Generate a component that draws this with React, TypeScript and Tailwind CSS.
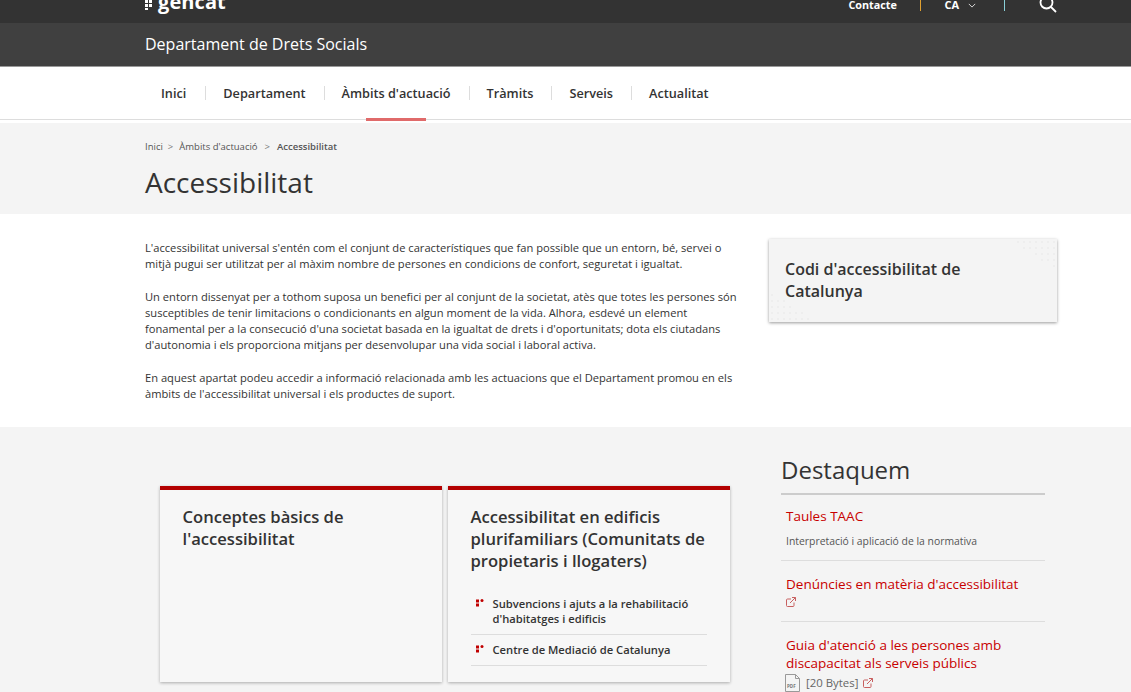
const Ext = ({ cls = "" }: { cls?: string }) => (
  <svg viewBox="0 0 10 10" className={`w-[10px] h-[10px] ${cls}`} fill="none" stroke="#c86060" strokeWidth="1">
    <path d="M5 2H1.5a1 1 0 0 0-1 1v5.5a1 1 0 0 0 1 1H7a1 1 0 0 0 1-1V5.5" />
    <path d="M6 .5h3.5V4M9.5.5 4 6" />
  </svg>
);

const Bullet = () => (
  <svg viewBox="0 0 8 8" className="w-[8px] h-[8px] shrink-0 mt-[-1px]" fill="#c00000">
    <rect x="0" y="0.5" width="3" height="3" />
    <rect x="0" y="4.5" width="3" height="3" />
    <rect x="4.5" y="0" width="3" height="3" rx="1.5" />
  </svg>
);

const Dots = ({ cls }: { cls: string }) => (
  <svg viewBox="0 0 48 30" className={`absolute w-[48px] h-[30px] ${cls}`} fill="#ececec">
    {[0, 1, 2, 3, 4].flatMap((r) =>
      [0, 1, 2, 3, 4, 5, 6, 7].map((c) =>
        c > r * 1.6 ? <circle key={`${r}-${c}`} cx={c * 6 + 3} cy={r * 6 + 3} r="1" /> : null
      )
    )}
  </svg>
);

const nav = ["Inici", "Departament", "Àmbits d'actuació", "Tràmits", "Serveis", "Actualitat"];

export default function App() {
  return (
    <div className="h-[692px] overflow-hidden bg-[#f4f4f4] text-[#333] font-['Open_Sans',sans-serif]">
      <div className="h-[23px] bg-[#333] overflow-hidden">
        <div className="w-[912px] ml-[145px] flex items-start h-[23px] text-white">
          <div className="flex items-start gap-[3px]">
            <svg viewBox="0 0 10 10" className="w-[10px] h-[10px]" fill="#fff">
              <rect x="0" y="0" width="3" height="3" />
              <rect x="4" y="0" width="3" height="3" />
              <rect x="0" y="4" width="3" height="3" />
              <rect x="4" y="4" width="3" height="3" />
              <rect x="0" y="8" width="3" height="2" />
            </svg>
            <span className="text-[20px] font-bold leading-[20px] -mt-[8px] tracking-[0.1px]">gencat</span>
          </div>
          <div className="ml-auto flex items-start">
            <span className="text-[10.8px] font-bold leading-[10px] w-[50px]">Contacte</span>
            <span className="ml-[22px] w-px h-[11px] bg-[#e0a030]" />
            <span className="ml-[23px] text-[11px] font-bold leading-[10px]">CA</span>
            <svg viewBox="0 0 10 6" className="ml-[9px] w-[8px] h-[5px] mt-[3px]" fill="none" stroke="#ddd" strokeWidth="1.2"><path d="M1 1l4 4 4-4" /></svg>
            <span className="ml-[28px] w-px h-[11px] bg-[#8ad0d8]" />
            <svg viewBox="0 0 18 18" className="ml-[34px] w-[18px] h-[18px] -mt-[5px]" fill="none" stroke="#fff" strokeWidth="1.8"><circle cx="7.5" cy="7.5" r="6" /><path d="M12 12l5 5" /></svg>
          </div>
        </div>
      </div>
      <div className="h-[44px] bg-[#404040] border-b border-b-[#999]">
        <div className="w-[912px] ml-[145px] text-white text-[16px] leading-[43px]">Departament de Drets Socials</div>
      </div>
      <nav className="h-[53px] bg-white border-b border-b-[#ddd] relative">
        <div className="w-[912px] ml-[145px] flex items-center h-[52px] pt-[1px]">
          {nav.map((n, i) => (
            <div key={n} className="flex items-center">
              {i > 0 && <span className="w-px h-[14px] bg-[#ddd]" />}
              <span className={`text-[12.7px] font-semibold text-[#333] ${i === 0 ? "pl-[16px] pr-[19px]" : "pl-[17px] pr-[18px]"}`}>{n}</span>
            </div>
          ))}
        </div>
        <span className="absolute left-[366px] top-[51px] w-[60px] h-[3px] bg-[#e06a6a]" />
      </nav>
      <div className="h-[94px] border-t-[3px] border-t-white bg-[#f4f4f4]">
        <div className="w-[912px] ml-[145px] pt-[17px]">
          <div className="flex items-center text-[9.5px] leading-[14px] text-[#555]">
            <span>Inici</span><span className="ml-[5px] mr-[6px] text-[#777]">&gt;</span>
            <span>Àmbits d'actuació</span><span className="mx-[7px] text-[#777]">&gt;</span>
            <span className="font-semibold">Accessibilitat</span>
          </div>
          <h1 className="text-[28px] leading-[38px] mt-[9px] text-[#333]">Accessibilitat</h1>
        </div>
      </div>
      <div className="h-[213px] bg-white">
        <div className="w-[912px] ml-[145px] flex">
          <div className="w-[600px] pt-[26px] text-[11.15px] leading-[16px] text-[#333]">
            <p className="mb-[17px]">L'accessibilitat universal s'entén com el conjunt de característiques que fan possible que un entorn, bé, servei o mitjà pugui ser utilitzat per al màxim nombre de persones en condicions de confort, seguretat i igualtat.</p>
            <p className="mb-[17px]">Un entorn dissenyat per a tothom suposa un benefici per al conjunt de la societat, atès que totes les persones són susceptibles de tenir limitacions o condicionants en algun moment de la vida. Alhora, esdevé un element fonamental per a la consecució d'una societat basada en la igualtat de drets i d'oportunitats; dota els ciutadans d'autonomia i els proporciona mitjans per desenvolupar una vida social i laboral activa.</p>
            <p>En aquest apartat podeu accedir a informació relacionada amb les actuacions que el Departament promou en els àmbits de l'accessibilitat universal i els productes de suport.</p>
          </div>
          <div className="ml-[24px] mt-[25px] w-[288px] h-[83px] bg-[#f4f4f4] shadow-[0_1px_3px_rgba(0,0,0,0.4)] relative overflow-hidden px-[16px] pt-[19px]">
            <Dots cls="top-0 right-0" />
            <Dots cls="bottom-0 left-0 rotate-180" />
            <h2 className="relative text-[16px] leading-[22px] font-semibold text-[#333]">Codi d'accessibilitat de Catalunya</h2>
          </div>
        </div>
      </div>
      <div className="w-[912px] ml-[145px] flex">
        <div className="ml-[15px] mt-[59px] flex gap-[6px] items-start">
          <div className="w-[282px] h-[196px] bg-[#f7f7f7] border-t-4 border-t-[#b30000] shadow-[0_1px_3px_rgba(0,0,0,0.3)] pl-[22.5px] pr-[20px] pt-[16px]">
            <h3 className="text-[16.6px] leading-[22px] font-semibold">Conceptes bàsics de l'accessibilitat</h3>
          </div>
          <div className="w-[282px] h-[196px] bg-[#f7f7f7] border-t-4 border-t-[#b30000] shadow-[0_1px_3px_rgba(0,0,0,0.3)] pl-[22.5px] pr-[20px] pt-[16px]">
            <h3 className="text-[16.6px] leading-[22px] font-semibold">Accessibilitat en edificis plurifamiliars (Comunitats de propietaris i llogaters)</h3>
            <ul className="mt-[16px] w-[236px] text-[11.2px] font-semibold leading-[15px] text-[#333]">
              <li className="flex border-b border-b-[#ddd] pt-[8px] pb-[8px] pl-[5px]"><div className="w-[17px] shrink-0 pt-[4px]"><Bullet /></div><span>Subvencions i ajuts a la rehabilitació d'habitatges i edificis</span></li>
              <li className="flex border-b border-b-[#ddd] pt-[7px] pb-[8px] pl-[5px]"><div className="w-[17px] shrink-0 pt-[4px]"><Bullet /></div><span>Centre de Mediació de Catalunya</span></li>
            </ul>
          </div>
        </div>
        <aside className="ml-[51px] mt-[27px] w-[264px]">
          <h2 className="text-[24px] leading-[32px] pb-[7px] border-b-2 border-b-[#ccc] text-[#333]">Destaquem</h2>
          <div className="border-b border-b-[#ddd] px-[5px] pt-[12px] pb-[12px]">
            <div className="text-[13.5px] leading-[18px] text-[#c80000]">Taules TAAC</div>
            <div className="text-[10.4px] leading-[14px] mt-[9px] text-[#555]">Interpretació i aplicació de la normativa</div>
          </div>
          <div className="border-b border-b-[#ddd] px-[5px] pt-[14px] pb-[12px]">
            <div className="text-[13.5px] leading-[18px] text-[#c80000]">Denúncies en matèria d'accessibilitat</div>
            <div className="mt-[4px] h-[12px]"><Ext /></div>
          </div>
          <div className="px-[5px] pt-[14px]">
            <div className="text-[13.5px] leading-[18px] text-[#c80000]">Guia d'atenció a les persones amb discapacitat als serveis públics</div>
            <div className="flex items-center text-[11.4px] text-[#666] leading-[16px] mt-[2px] -ml-[1px]">
              <svg viewBox="0 0 15 18" className="w-[15px] h-[18px]" fill="none" stroke="#999"><path d="M.5.5h10l4 4v13H.5z" /><path d="M10.5.5v4h4" /><text x="2" y="14" fontSize="4.5" fontWeight="700" fill="#777" stroke="none">PDF</text></svg>
              <span className="ml-[6px]">[20 Bytes]</span>
              <Ext cls="ml-[5px]" />
            </div>
          </div>
        </aside>
      </div>
    </div>
  );
}
